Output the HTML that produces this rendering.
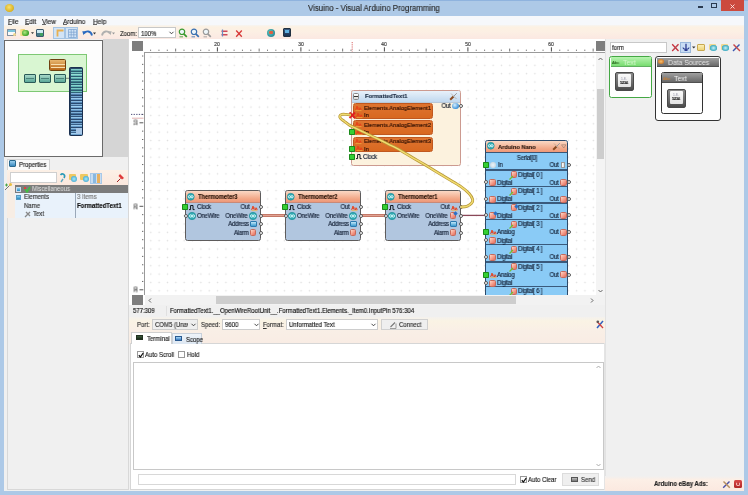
<!DOCTYPE html>
<html><head><meta charset="utf-8">
<style>
*{margin:0;padding:0;box-sizing:border-box}
html,body{width:748px;height:495px;overflow:hidden}
body{position:relative;background:#adc9e7;font-family:"Liberation Sans",sans-serif;color:#222}
.a{position:absolute}
.t{position:absolute;white-space:nowrap;line-height:1;will-change:transform;-webkit-text-stroke:0.15px currentColor}
svg{position:absolute;overflow:visible}
</style></head><body>
<div class="a" style="left:0px;top:0px;width:748px;height:1px;background:#8fb3de"></div>
<div class="t" style="left:307.5px;top:4px;font-size:8.489px;transform:scaleX(0.9259);transform-origin:0 0;color:#2a2a2a">Visuino - Visual Arduino Programming</div>
<div class="a" style="left:5px;top:3.6px;width:8.6px;height:8px;border-radius:50%;background:radial-gradient(circle at 45% 40%,#f8e070,#d8b020 70%,#b89010)"></div>
<div class="a" style="left:698px;top:6.2px;width:4.6px;height:1.4px;background:#2a3a50"></div>
<div class="a" style="left:711.3px;top:3.4px;width:5.6px;height:4.4px;border:0.9px solid #2a3a50;border-top-width:1.5px"></div>
<div class="a" style="left:721px;top:0.3px;width:23px;height:10.5px;background:#cc4a3e"></div>
<svg style="left:730.3px;top:3.5px" width="5" height="5"><path d="M0.5 0.5L4.5 4.5M4.5 0.5L0.5 4.5" stroke="#fae8e6" stroke-width="0.9"/></svg>
<div class="a" style="left:4px;top:16px;width:740px;height:474.5px;background:#f0f0f0"></div>
<div class="a" style="left:4px;top:16px;width:740px;height:9px;background:#f6f8fb"></div>
<div class="t" style="left:8px;top:18px;font-size:7.280px;transform:scaleX(0.8929);transform-origin:0 0;color:#222"><u>F</u>ile</div>
<div class="t" style="left:25px;top:18px;font-size:7.280px;transform:scaleX(0.8929);transform-origin:0 0;color:#222"><u>E</u>dit</div>
<div class="t" style="left:42px;top:18px;font-size:7.280px;transform:scaleX(0.8929);transform-origin:0 0;color:#222"><u>V</u>iew</div>
<div class="t" style="left:62.6px;top:18px;font-size:7.280px;transform:scaleX(0.8929);transform-origin:0 0;color:#222"><u>A</u>rduino</div>
<div class="t" style="left:92.7px;top:18px;font-size:7.280px;transform:scaleX(0.8929);transform-origin:0 0;color:#222"><u>H</u>elp</div>
<div class="a" style="left:4px;top:25px;width:740px;height:14.4px;background:linear-gradient(#f6f4f2 0,#fcf1e2 2px,#fcefe4 50%,#fbe8e2 100%)"></div>
<div class="a" style="left:8px;top:24.3px;width:3.5px;height:0.7px;background:#666"></div>
<div class="a" style="left:25px;top:24.3px;width:3.8px;height:0.7px;background:#666"></div>
<div class="a" style="left:42px;top:24.3px;width:4.2px;height:0.7px;background:#666"></div>
<div class="a" style="left:62.6px;top:24.3px;width:4.3px;height:0.7px;background:#666"></div>
<div class="a" style="left:92.7px;top:24.3px;width:4.6px;height:0.7px;background:#666"></div>
<div class="a" style="left:4px;top:40px;width:99px;height:116.6px;background:#fdfdfd;border:1px solid #6a6a6a"></div>
<div class="a" style="left:103px;top:39px;width:26px;height:118px;background:#d5d5d5"></div>
<div class="a" style="left:129px;top:39px;width:477px;height:266px;background:#fff"></div>
<div class="a" style="left:128px;top:39px;width:1px;height:451px;background:#d8d8d8"></div>
<div class="a" style="left:132px;top:41px;width:11px;height:10px;background:#7e7e7e"></div>
<div class="a" style="left:596px;top:41px;width:10px;height:10px;background:#7e7e7e"></div>
<div class="a" style="left:144px;top:51.9px;width:461px;height:1.4px;background:#9a9a9a"></div>
<div class="a" style="left:144.1px;top:52.2px;width:1.2px;height:243px;background:#9a9a9a"></div>
<div class="a" style="left:132px;top:295px;width:11px;height:10px;background:#7e7e7e"></div>
<div class="a" style="left:596px;top:53px;width:9px;height:242px;background:#f4f4f4"></div>
<div class="a" style="left:597px;top:89px;width:7px;height:70px;background:#cdcdcd"></div>
<div class="a" style="left:145px;top:295px;width:460px;height:10px;background:#f2f2f2"></div>
<div class="a" style="left:216px;top:296px;width:300px;height:8px;background:#cdcdcd"></div>
<svg style="left:147.5px;top:298px" width="4" height="5"><path d="M3 0.5L1 2.5L3 4.5" stroke="#555" stroke-width="0.9" fill="none"/></svg>
<svg style="left:589.5px;top:298px" width="4" height="5"><path d="M1 0.5L3 2.5L1 4.5" stroke="#555" stroke-width="0.9" fill="none"/></svg>
<svg style="left:598px;top:57px" width="5" height="4"><path d="M0.5 3L2.5 1L4.5 3" stroke="#555" stroke-width="0.9" fill="none"/></svg>
<svg style="left:598px;top:289px" width="5" height="4"><path d="M0.5 1L2.5 3L4.5 1" stroke="#555" stroke-width="0.9" fill="none"/></svg>
<div class="a" style="left:0;top:0;width:596px;height:295px;overflow:hidden">
<svg style="left:0;top:0" width="596" height="295"><defs><pattern id="gd" x="146.6" y="52.8" width="8.35" height="8.35" patternUnits="userSpaceOnUse"><path d="M3.4 4.2H5M4.2 3.4V5" stroke="#dedede" stroke-width="0.7"/></pattern></defs><rect x="145.5" y="53.5" width="451" height="242" fill="url(#gd)"/></svg>
<svg style="left:0;top:0" width="596" height="295"><path d="M261 215.4H285M361 215.4H385" stroke="#b86a58" stroke-width="3" fill="none"/><path d="M261 215.4H285M361 215.4H385" stroke="#e2a292" stroke-width="1.5" fill="none"/><path d="M461 215.4H485" stroke="#8a4858" stroke-width="1.3" fill="none"/></svg>
<div class="a" style="left:185px;top:190.2px;width:75.5px;height:51px;border:1px solid #5e5c5c;border-radius:2.5px;background:#b1c6df;overflow:hidden"><div class="a" style="left:0;top:0;width:74px;height:11.8px;background:linear-gradient(#fad8c4,#f2a888 70%,#ee9878);border-bottom:0.8px solid #c88a78"></div></div>
<svg style="left:187.3px;top:192.5px" width="7.5" height="7.5"><circle cx="3.75" cy="3.75" r="3.45" fill="#2eaab4" stroke="#1e8a94" stroke-width="0.6"/><circle cx="2.45" cy="3.75" r="1.12" fill="none" stroke="#e8ffff" stroke-width="0.9"/><circle cx="5.05" cy="3.75" r="1.12" fill="none" stroke="#e8ffff" stroke-width="0.9"/></svg>
<div class="t" style="left:198px;top:194px;font-size:6.555px;transform:scaleX(0.8696);transform-origin:0 0;font-weight:bold;color:#2a1408">Thermometer3</div>
<div class="a" style="left:181.7px;top:203.7px;width:6px;height:6.2px;background:#34d034;border:1px solid #1a8a1a;border-radius:0.8px"></div>
<svg style="left:189px;top:204.6px" width="6" height="5"><path d="M0 4.6H1.6V0.5H4V4.6H5.6" stroke="#101820" stroke-width="1" fill="none"/></svg>
<div class="t" style="left:196.5px;top:204px;font-size:6.466px;transform:scaleX(0.9434);transform-origin:0 0;color:#142035;letter-spacing:-0.265px">Clock</div>
<div class="a" style="left:183.5px;top:213.5px;width:4px;height:4px;background:#fff;border:0.8px solid #555;border-radius:50%"></div>
<svg style="left:188px;top:211.5px" width="8" height="8"><circle cx="4.0" cy="4.0" r="3.7" fill="#2eaab4" stroke="#1e8a94" stroke-width="0.6"/><circle cx="2.7" cy="4.0" r="1.20" fill="none" stroke="#e8ffff" stroke-width="0.9"/><circle cx="5.3" cy="4.0" r="1.20" fill="none" stroke="#e8ffff" stroke-width="0.9"/></svg>
<div class="t" style="left:197px;top:213px;font-size:6.466px;transform:scaleX(0.9434);transform-origin:0 0;color:#142035;letter-spacing:-0.265px">OneWire</div>
<div class="t" style="right:346.00px;top:204px;font-size:6.466px;transform:scaleX(0.9434);transform-origin:100% 0;color:#142035;letter-spacing:-0.265px">Out</div>
<svg style="left:250.5px;top:204.5px" width="7" height="6"><path d="M0.6 5 L2 1 L3.3 5 M1.2 3.5H2.8 M3.8 2.3 L4.6 5 L5.4 2.8 L6.2 5" stroke="#e84018" stroke-width="0.9" fill="none"/><path d="M0.5 5.6H6.5" stroke="#f8b040" stroke-width="0.7"/></svg>
<div class="a" style="left:258.5px;top:205px;width:4px;height:4px;background:#fff;border:0.8px solid #555;border-radius:50%"></div>
<div class="t" style="right:348.00px;top:213px;font-size:6.466px;transform:scaleX(0.9434);transform-origin:100% 0;color:#142035;letter-spacing:-0.265px">OneWire</div>
<svg style="left:249.0px;top:211.5px" width="8" height="8"><circle cx="4.0" cy="4.0" r="3.7" fill="#2eaab4" stroke="#1e8a94" stroke-width="0.6"/><circle cx="2.7" cy="4.0" r="1.20" fill="none" stroke="#e8ffff" stroke-width="0.9"/><circle cx="5.3" cy="4.0" r="1.20" fill="none" stroke="#e8ffff" stroke-width="0.9"/></svg>
<div class="a" style="left:258.5px;top:213.5px;width:4px;height:4px;background:#fff;border:0.8px solid #555;border-radius:50%"></div>
<div class="t" style="right:347.50px;top:221px;font-size:6.466px;transform:scaleX(0.9434);transform-origin:100% 0;color:#142035;letter-spacing:-0.265px">Address</div>
<div class="a" style="left:249.5px;top:221px;width:7px;height:6px;border-radius:1px;background:linear-gradient(#bfe6f8,#3a9ad0);border:0.6px solid #2a7ab0"></div>
<div class="a" style="left:258.5px;top:222px;width:4px;height:4px;background:#fff;border:0.8px solid #555;border-radius:50%"></div>
<div class="t" style="right:347.50px;top:230px;font-size:6.466px;transform:scaleX(0.9434);transform-origin:100% 0;color:#142035;letter-spacing:-0.265px">Alarm</div>
<div class="a" style="left:249.5px;top:229px;width:6.5px;height:7px;border-radius:1.5px;background:linear-gradient(135deg,#fcd8c8,#f49a88 55%,#e07060);border:0.6px solid #c86a5a"></div>
<div class="a" style="left:258.5px;top:230.5px;width:4px;height:4px;background:#fff;border:0.8px solid #555;border-radius:50%"></div>
<div class="a" style="left:285px;top:190.2px;width:75.5px;height:51px;border:1px solid #5e5c5c;border-radius:2.5px;background:#b1c6df;overflow:hidden"><div class="a" style="left:0;top:0;width:74px;height:11.8px;background:linear-gradient(#fad8c4,#f2a888 70%,#ee9878);border-bottom:0.8px solid #c88a78"></div></div>
<svg style="left:287.3px;top:192.5px" width="7.5" height="7.5"><circle cx="3.75" cy="3.75" r="3.45" fill="#2eaab4" stroke="#1e8a94" stroke-width="0.6"/><circle cx="2.45" cy="3.75" r="1.12" fill="none" stroke="#e8ffff" stroke-width="0.9"/><circle cx="5.05" cy="3.75" r="1.12" fill="none" stroke="#e8ffff" stroke-width="0.9"/></svg>
<div class="t" style="left:298px;top:194px;font-size:6.555px;transform:scaleX(0.8696);transform-origin:0 0;font-weight:bold;color:#2a1408">Thermometer2</div>
<div class="a" style="left:281.7px;top:203.7px;width:6px;height:6.2px;background:#34d034;border:1px solid #1a8a1a;border-radius:0.8px"></div>
<svg style="left:289px;top:204.6px" width="6" height="5"><path d="M0 4.6H1.6V0.5H4V4.6H5.6" stroke="#101820" stroke-width="1" fill="none"/></svg>
<div class="t" style="left:296.5px;top:204px;font-size:6.466px;transform:scaleX(0.9434);transform-origin:0 0;color:#142035;letter-spacing:-0.265px">Clock</div>
<div class="a" style="left:283.5px;top:213.5px;width:4px;height:4px;background:#fff;border:0.8px solid #555;border-radius:50%"></div>
<svg style="left:288px;top:211.5px" width="8" height="8"><circle cx="4.0" cy="4.0" r="3.7" fill="#2eaab4" stroke="#1e8a94" stroke-width="0.6"/><circle cx="2.7" cy="4.0" r="1.20" fill="none" stroke="#e8ffff" stroke-width="0.9"/><circle cx="5.3" cy="4.0" r="1.20" fill="none" stroke="#e8ffff" stroke-width="0.9"/></svg>
<div class="t" style="left:297px;top:213px;font-size:6.466px;transform:scaleX(0.9434);transform-origin:0 0;color:#142035;letter-spacing:-0.265px">OneWire</div>
<div class="t" style="right:246.00px;top:204px;font-size:6.466px;transform:scaleX(0.9434);transform-origin:100% 0;color:#142035;letter-spacing:-0.265px">Out</div>
<svg style="left:350.5px;top:204.5px" width="7" height="6"><path d="M0.6 5 L2 1 L3.3 5 M1.2 3.5H2.8 M3.8 2.3 L4.6 5 L5.4 2.8 L6.2 5" stroke="#e84018" stroke-width="0.9" fill="none"/><path d="M0.5 5.6H6.5" stroke="#f8b040" stroke-width="0.7"/></svg>
<div class="a" style="left:358.5px;top:205px;width:4px;height:4px;background:#fff;border:0.8px solid #555;border-radius:50%"></div>
<div class="t" style="right:248.00px;top:213px;font-size:6.466px;transform:scaleX(0.9434);transform-origin:100% 0;color:#142035;letter-spacing:-0.265px">OneWire</div>
<svg style="left:349.0px;top:211.5px" width="8" height="8"><circle cx="4.0" cy="4.0" r="3.7" fill="#2eaab4" stroke="#1e8a94" stroke-width="0.6"/><circle cx="2.7" cy="4.0" r="1.20" fill="none" stroke="#e8ffff" stroke-width="0.9"/><circle cx="5.3" cy="4.0" r="1.20" fill="none" stroke="#e8ffff" stroke-width="0.9"/></svg>
<div class="a" style="left:358.5px;top:213.5px;width:4px;height:4px;background:#fff;border:0.8px solid #555;border-radius:50%"></div>
<div class="t" style="right:247.50px;top:221px;font-size:6.466px;transform:scaleX(0.9434);transform-origin:100% 0;color:#142035;letter-spacing:-0.265px">Address</div>
<div class="a" style="left:349.5px;top:221px;width:7px;height:6px;border-radius:1px;background:linear-gradient(#bfe6f8,#3a9ad0);border:0.6px solid #2a7ab0"></div>
<div class="a" style="left:358.5px;top:222px;width:4px;height:4px;background:#fff;border:0.8px solid #555;border-radius:50%"></div>
<div class="t" style="right:247.50px;top:230px;font-size:6.466px;transform:scaleX(0.9434);transform-origin:100% 0;color:#142035;letter-spacing:-0.265px">Alarm</div>
<div class="a" style="left:349.5px;top:229px;width:6.5px;height:7px;border-radius:1.5px;background:linear-gradient(135deg,#fcd8c8,#f49a88 55%,#e07060);border:0.6px solid #c86a5a"></div>
<div class="a" style="left:358.5px;top:230.5px;width:4px;height:4px;background:#fff;border:0.8px solid #555;border-radius:50%"></div>
<div class="a" style="left:385px;top:190.2px;width:75.5px;height:51px;border:1px solid #5e5c5c;border-radius:2.5px;background:#b1c6df;overflow:hidden"><div class="a" style="left:0;top:0;width:74px;height:11.8px;background:linear-gradient(#fad8c4,#f2a888 70%,#ee9878);border-bottom:0.8px solid #c88a78"></div></div>
<svg style="left:387.3px;top:192.5px" width="7.5" height="7.5"><circle cx="3.75" cy="3.75" r="3.45" fill="#2eaab4" stroke="#1e8a94" stroke-width="0.6"/><circle cx="2.45" cy="3.75" r="1.12" fill="none" stroke="#e8ffff" stroke-width="0.9"/><circle cx="5.05" cy="3.75" r="1.12" fill="none" stroke="#e8ffff" stroke-width="0.9"/></svg>
<div class="t" style="left:398px;top:194px;font-size:6.555px;transform:scaleX(0.8696);transform-origin:0 0;font-weight:bold;color:#2a1408">Thermometer1</div>
<div class="a" style="left:381.7px;top:203.7px;width:6px;height:6.2px;background:#34d034;border:1px solid #1a8a1a;border-radius:0.8px"></div>
<svg style="left:389px;top:204.6px" width="6" height="5"><path d="M0 4.6H1.6V0.5H4V4.6H5.6" stroke="#101820" stroke-width="1" fill="none"/></svg>
<div class="t" style="left:396.5px;top:204px;font-size:6.466px;transform:scaleX(0.9434);transform-origin:0 0;color:#142035;letter-spacing:-0.265px">Clock</div>
<div class="a" style="left:383.5px;top:213.5px;width:4px;height:4px;background:#fff;border:0.8px solid #555;border-radius:50%"></div>
<svg style="left:388px;top:211.5px" width="8" height="8"><circle cx="4.0" cy="4.0" r="3.7" fill="#2eaab4" stroke="#1e8a94" stroke-width="0.6"/><circle cx="2.7" cy="4.0" r="1.20" fill="none" stroke="#e8ffff" stroke-width="0.9"/><circle cx="5.3" cy="4.0" r="1.20" fill="none" stroke="#e8ffff" stroke-width="0.9"/></svg>
<div class="t" style="left:397px;top:213px;font-size:6.466px;transform:scaleX(0.9434);transform-origin:0 0;color:#142035;letter-spacing:-0.265px">OneWire</div>
<div class="t" style="right:146.00px;top:204px;font-size:6.466px;transform:scaleX(0.9434);transform-origin:100% 0;color:#142035;letter-spacing:-0.265px">Out</div>
<svg style="left:450.5px;top:204.5px" width="7" height="6"><path d="M0.6 5 L2 1 L3.3 5 M1.2 3.5H2.8 M3.8 2.3 L4.6 5 L5.4 2.8 L6.2 5" stroke="#e84018" stroke-width="0.9" fill="none"/><path d="M0.5 5.6H6.5" stroke="#f8b040" stroke-width="0.7"/></svg>
<div class="a" style="left:458.5px;top:205px;width:4px;height:4px;background:#fff;border:0.8px solid #555;border-radius:50%"></div>
<div class="t" style="right:148.00px;top:213px;font-size:6.466px;transform:scaleX(0.9434);transform-origin:100% 0;color:#142035;letter-spacing:-0.265px">OneWire</div>
<div class="a" style="left:449.5px;top:212.3px;width:6.5px;height:7px;border-radius:1.5px;background:linear-gradient(135deg,#fcd8c8,#f49a88 55%,#e07060);border:0.6px solid #c86a5a"></div>
<svg style="left:452.5px;top:210.5px" width="5" height="5"><path d="M2.5 0.3L4.7 2.5L2.5 4.7L0.3 2.5Z" fill="#2a70c8"/></svg>
<div class="a" style="left:458.5px;top:213.5px;width:4px;height:4px;background:#fff;border:0.8px solid #555;border-radius:50%"></div>
<div class="t" style="right:147.50px;top:221px;font-size:6.466px;transform:scaleX(0.9434);transform-origin:100% 0;color:#142035;letter-spacing:-0.265px">Address</div>
<div class="a" style="left:449.5px;top:221px;width:7px;height:6px;border-radius:1px;background:linear-gradient(#bfe6f8,#3a9ad0);border:0.6px solid #2a7ab0"></div>
<div class="a" style="left:458.5px;top:222px;width:4px;height:4px;background:#fff;border:0.8px solid #555;border-radius:50%"></div>
<div class="t" style="right:147.50px;top:230px;font-size:6.466px;transform:scaleX(0.9434);transform-origin:100% 0;color:#142035;letter-spacing:-0.265px">Alarm</div>
<div class="a" style="left:449.5px;top:229px;width:6.5px;height:7px;border-radius:1.5px;background:linear-gradient(135deg,#fcd8c8,#f49a88 55%,#e07060);border:0.6px solid #c86a5a"></div>
<div class="a" style="left:458.5px;top:230.5px;width:4px;height:4px;background:#fff;border:0.8px solid #555;border-radius:50%"></div>
<div class="a" style="left:351.3px;top:90.3px;width:109.4px;height:76.2px;border:1px solid #cc9a90;border-radius:2.5px;background:#fcf2de;overflow:hidden"><div class="a" style="left:0;top:0;width:108px;height:11.5px;background:linear-gradient(#e8f1fa,#c0d8ef);border-bottom:0.8px solid #b8c8d8"></div></div>
<div class="a" style="left:352.8px;top:92.5px;width:6.5px;height:7px;border-radius:1.5px;background:linear-gradient(#fff,#d8d8d8);border:0.6px solid #888"></div>
<div class="a" style="left:354.3px;top:96px;width:3.5px;height:0.8px;background:#333"></div>
<div class="t" style="left:365px;top:93px;font-size:6.042px;transform:scaleX(0.9434);transform-origin:0 0;font-weight:bold;color:#1a2a40">FormattedText1</div>
<svg style="left:449px;top:92px" width="9" height="9"><path d="M1.2 7.8L4.5 4.5" stroke="#8a4a20" stroke-width="2"/><path d="M4.5 4.5L7.8 1.2" stroke="#9a9a9a" stroke-width="1"/><path d="M2 1.5L7.5 7" stroke="#b0a090" stroke-width="0.9" opacity=".8"/></svg>
<div class="a" style="left:352.6px;top:103.3px;width:80px;height:15.3px;border-radius:2.5px;background:linear-gradient(#de7430,#d86820);border:0.8px solid #c05820"></div>
<svg style="left:355px;top:104.5px" width="7" height="6"><path d="M0.6 5 L2 1 L3.3 5 M1.2 3.5H2.8 M3.8 2.3 L4.6 5 L5.4 2.8 L6.2 5" stroke="#e84018" stroke-width="0.9" fill="none"/><path d="M0.5 5.6H6.5" stroke="#f8b040" stroke-width="0.7"/></svg>
<svg style="left:356px;top:111.8px" width="7" height="6"><path d="M0.6 5 L2 1 L3.3 5 M1.2 3.5H2.8 M3.8 2.3 L4.6 5 L5.4 2.8 L6.2 5" stroke="#e84018" stroke-width="0.9" fill="none"/><path d="M0.5 5.6H6.5" stroke="#f8b040" stroke-width="0.7"/></svg>
<div class="t" style="left:363.5px;top:105px;font-size:6.042px;transform:scaleX(0.9434);transform-origin:0 0;color:#301000">Elements.AnalogElement1</div>
<div class="t" style="left:363.5px;top:112px;font-size:6.042px;transform:scaleX(0.9434);transform-origin:0 0;color:#200800">In</div>
<div class="a" style="left:352.6px;top:120.0px;width:80px;height:15.3px;border-radius:2.5px;background:linear-gradient(#de7430,#d86820);border:0.8px solid #c05820"></div>
<svg style="left:355px;top:121.2px" width="7" height="6"><path d="M0.6 5 L2 1 L3.3 5 M1.2 3.5H2.8 M3.8 2.3 L4.6 5 L5.4 2.8 L6.2 5" stroke="#e84018" stroke-width="0.9" fill="none"/><path d="M0.5 5.6H6.5" stroke="#f8b040" stroke-width="0.7"/></svg>
<svg style="left:356px;top:128.5px" width="7" height="6"><path d="M0.6 5 L2 1 L3.3 5 M1.2 3.5H2.8 M3.8 2.3 L4.6 5 L5.4 2.8 L6.2 5" stroke="#e84018" stroke-width="0.9" fill="none"/><path d="M0.5 5.6H6.5" stroke="#f8b040" stroke-width="0.7"/></svg>
<div class="t" style="left:363.5px;top:122px;font-size:6.042px;transform:scaleX(0.9434);transform-origin:0 0;color:#301000">Elements.AnalogElement2</div>
<div class="t" style="left:363.5px;top:129px;font-size:6.042px;transform:scaleX(0.9434);transform-origin:0 0;color:#200800">In</div>
<div class="a" style="left:352.6px;top:136.6px;width:80px;height:15.3px;border-radius:2.5px;background:linear-gradient(#de7430,#d86820);border:0.8px solid #c05820"></div>
<svg style="left:355px;top:137.79999999999998px" width="7" height="6"><path d="M0.6 5 L2 1 L3.3 5 M1.2 3.5H2.8 M3.8 2.3 L4.6 5 L5.4 2.8 L6.2 5" stroke="#e84018" stroke-width="0.9" fill="none"/><path d="M0.5 5.6H6.5" stroke="#f8b040" stroke-width="0.7"/></svg>
<svg style="left:356px;top:145.1px" width="7" height="6"><path d="M0.6 5 L2 1 L3.3 5 M1.2 3.5H2.8 M3.8 2.3 L4.6 5 L5.4 2.8 L6.2 5" stroke="#e84018" stroke-width="0.9" fill="none"/><path d="M0.5 5.6H6.5" stroke="#f8b040" stroke-width="0.7"/></svg>
<div class="t" style="left:363.5px;top:138px;font-size:6.042px;transform:scaleX(0.9434);transform-origin:0 0;color:#301000">Elements.AnalogElement3</div>
<div class="t" style="left:363.5px;top:146px;font-size:6.042px;transform:scaleX(0.9434);transform-origin:0 0;color:#200800">In</div>
<svg style="left:348.5px;top:111.5px" width="7" height="7"><path d="M0.5 0.5L6 6M6 0.5L0.5 6" stroke="#e02020" stroke-width="2"/></svg>
<div class="a" style="left:349.2px;top:129.2px;width:6px;height:6.2px;background:#34d034;border:1px solid #1a8a1a;border-radius:0.8px"></div>
<div class="a" style="left:349.2px;top:146.0px;width:6px;height:6.2px;background:#34d034;border:1px solid #1a8a1a;border-radius:0.8px"></div>
<div class="a" style="left:349.2px;top:154.2px;width:6px;height:6.2px;background:#34d034;border:1px solid #1a8a1a;border-radius:0.8px"></div>
<svg style="left:356px;top:154.3px" width="6" height="5"><path d="M0 4.6H1.6V0.5H4V4.6H5.6" stroke="#101820" stroke-width="1" fill="none"/></svg>
<div class="t" style="left:362.5px;top:154px;font-size:6.466px;transform:scaleX(0.9434);transform-origin:0 0;color:#142035;letter-spacing:-0.265px">Clock</div>
<div class="t" style="right:145.00px;top:103px;font-size:6.466px;transform:scaleX(0.9434);transform-origin:100% 0;color:#101828;letter-spacing:-0.265px">Out</div>
<div class="a" style="left:452px;top:102.6px;width:6.5px;height:6px;border-radius:50%;background:radial-gradient(circle at 40% 35%,#d8f0ff,#3a90d8 70%,#2a6ab0)"></div>
<div class="a" style="left:459px;top:103.5px;width:4px;height:4px;background:#fff;border:0.8px solid #555;border-radius:50%"></div>
<svg style="left:0;top:0" width="596" height="295"><path d="M460.6 207 C461.62 206.90 464.88 207.02 466.7 206.4 C468.52 205.78 470.50 204.42 471.5 203.3 C472.50 202.18 473.10 201.32 472.7 199.7 C472.30 198.08 471.12 195.82 469.1 193.6 C467.08 191.38 464.03 188.82 460.6 186.4 C457.17 183.98 452.53 181.53 448.5 179.1 C444.47 176.67 440.40 174.23 436.4 171.8 C432.40 169.37 428.57 166.92 424.5 164.5 C420.43 162.08 416.53 159.95 412 157.3 C407.47 154.65 401.27 150.80 397.3 148.6 C393.33 146.40 391.23 145.62 388.2 144.1 C385.17 142.58 382.47 141.13 379.1 139.5 C375.73 137.87 370.97 135.72 368 134.3 C365.03 132.88 363.43 132.05 361.3 131 C359.17 129.95 357.22 129.00 355.2 128 C353.18 127.00 351.02 126.12 349.2 125 C347.38 123.88 345.72 122.37 344.3 121.3 C342.88 120.23 341.45 119.45 340.7 118.6 C339.95 117.75 339.58 116.90 339.8 116.2 C340.02 115.50 340.95 114.70 342 114.4 C343.05 114.10 344.60 114.30 346.1 114.4 C347.60 114.50 350.18 114.90 351 115" stroke="#b89838" stroke-width="2.9" fill="none"/><path d="M460.6 207 C461.62 206.90 464.88 207.02 466.7 206.4 C468.52 205.78 470.50 204.42 471.5 203.3 C472.50 202.18 473.10 201.32 472.7 199.7 C472.30 198.08 471.12 195.82 469.1 193.6 C467.08 191.38 464.03 188.82 460.6 186.4 C457.17 183.98 452.53 181.53 448.5 179.1 C444.47 176.67 440.40 174.23 436.4 171.8 C432.40 169.37 428.57 166.92 424.5 164.5 C420.43 162.08 416.53 159.95 412 157.3 C407.47 154.65 401.27 150.80 397.3 148.6 C393.33 146.40 391.23 145.62 388.2 144.1 C385.17 142.58 382.47 141.13 379.1 139.5 C375.73 137.87 370.97 135.72 368 134.3 C365.03 132.88 363.43 132.05 361.3 131 C359.17 129.95 357.22 129.00 355.2 128 C353.18 127.00 351.02 126.12 349.2 125 C347.38 123.88 345.72 122.37 344.3 121.3 C342.88 120.23 341.45 119.45 340.7 118.6 C339.95 117.75 339.58 116.90 339.8 116.2 C340.02 115.50 340.95 114.70 342 114.4 C343.05 114.10 344.60 114.30 346.1 114.4 C347.60 114.50 350.18 114.90 351 115" stroke="#f0dc70" stroke-width="1.4" fill="none"/></svg>
<div class="a" style="left:485.4px;top:140.3px;width:83.10000000000002px;height:170px;border:1px solid #2c4a6a;border-radius:2.5px;background:#8acbf6;overflow:hidden"><div class="a" style="left:0;top:0;width:90px;height:11.7px;background:linear-gradient(#fad8c4,#f2a888 70%,#ee9878);border-bottom:1.3px solid #3a5676"></div></div>
<svg style="left:487px;top:142.2px" width="7.5" height="7.5"><circle cx="3.75" cy="3.75" r="3.45" fill="#2eaab4" stroke="#1e8a94" stroke-width="0.6"/><circle cx="2.45" cy="3.75" r="1.12" fill="none" stroke="#e8ffff" stroke-width="0.9"/><circle cx="5.05" cy="3.75" r="1.12" fill="none" stroke="#e8ffff" stroke-width="0.9"/></svg>
<div class="t" style="left:497.5px;top:144px;font-size:6.042px;transform:scaleX(0.9434);transform-origin:0 0;font-weight:bold;color:#2a1810">Arduino Nano</div>
<svg style="left:552px;top:142px" width="9" height="9"><path d="M1.2 7.8L4.5 4.5" stroke="#8a4a20" stroke-width="2"/><path d="M4.5 4.5L7.8 1.2" stroke="#9a9a9a" stroke-width="1"/><path d="M2 1.5L7.5 7" stroke="#b0a090" stroke-width="0.9" opacity=".8"/></svg>
<svg style="left:561px;top:144px" width="6" height="5"><path d="M0.5 0.8H5L2.75 4Z" stroke="#a08070" stroke-width="0.7" fill="none"/></svg>
<div class="a" style="left:486.4px;top:169.4px;width:81.10000000000002px;height:1.4px;background:#3a5a7c"></div>
<div class="a" style="left:486.4px;top:185.9px;width:81.10000000000002px;height:1.4px;background:#3a5a7c"></div>
<div class="a" style="left:486.4px;top:202.4px;width:81.10000000000002px;height:1.4px;background:#3a5a7c"></div>
<div class="a" style="left:486.4px;top:218.9px;width:81.10000000000002px;height:1.4px;background:#3a5a7c"></div>
<div class="a" style="left:486.4px;top:244.0px;width:81.10000000000002px;height:1.4px;background:#3a5a7c"></div>
<div class="a" style="left:486.4px;top:261.4px;width:81.10000000000002px;height:1.4px;background:#3a5a7c"></div>
<div class="a" style="left:486.4px;top:286.09999999999997px;width:81.10000000000002px;height:1.4px;background:#3a5a7c"></div>
<div class="t" style="left:476.50px;width:100px;text-align:center;top:155px;font-size:6.466px;transform:scaleX(0.9434);transform-origin:50% 0;color:#142035;letter-spacing:-0.265px">Serial[0]</div>
<div class="a" style="left:482.7px;top:162.2px;width:6px;height:6.2px;background:#34d034;border:1px solid #1a8a1a;border-radius:0.8px"></div>
<div class="a" style="left:490px;top:161.5px;width:6px;height:6.5px;border-radius:50%;background:radial-gradient(#fff,#ccc);opacity:.8"></div>
<div class="t" style="left:497.5px;top:162px;font-size:6.466px;transform:scaleX(0.9434);transform-origin:0 0;color:#142035;letter-spacing:-0.265px">In</div>
<div class="t" style="right:37.00px;top:162px;font-size:6.466px;transform:scaleX(0.9434);transform-origin:100% 0;color:#142035;letter-spacing:-0.265px">Out</div>
<div class="a" style="left:560.5px;top:161.8px;width:4.5px;height:6.5px;background:linear-gradient(90deg,#fff,#ddd);border:0.6px solid #999"></div>
<div class="a" style="left:566.5px;top:163px;width:4px;height:4px;background:#fff;border:0.8px solid #555;border-radius:50%"></div>
<div class="a" style="left:510.5px;top:171.2px;width:6.5px;height:7px;border-radius:1.5px;background:linear-gradient(135deg,#fcd8c8,#f49a88 55%,#e07060);border:0.6px solid #c86a5a"></div>
<svg style="left:509px;top:174.5px" width="5" height="5"><path d="M0.5 4.5L4 1" stroke="#70c030" stroke-width="1.3"/></svg>
<div class="t" style="left:518px;top:172px;font-size:6.466px;transform:scaleX(0.9434);transform-origin:0 0;color:#142035;letter-spacing:-0.265px">Digital[ 0 ]</div>
<div class="a" style="left:483.5px;top:180.3px;width:4px;height:4px;background:#fff;border:0.8px solid #555;border-radius:50%"></div>
<div class="a" style="left:489px;top:179px;width:6.5px;height:7px;border-radius:1.5px;background:linear-gradient(135deg,#fcd8c8,#f49a88 55%,#e07060);border:0.6px solid #c86a5a"></div>
<div class="t" style="left:497px;top:180px;font-size:6.466px;transform:scaleX(0.9434);transform-origin:0 0;color:#142035;letter-spacing:-0.265px">Digital</div>
<div class="t" style="right:37.00px;top:180px;font-size:6.466px;transform:scaleX(0.9434);transform-origin:100% 0;color:#142035;letter-spacing:-0.265px">Out</div>
<div class="a" style="left:560px;top:179px;width:6.5px;height:7px;border-radius:1.5px;background:linear-gradient(135deg,#fcd8c8,#f49a88 55%,#e07060);border:0.6px solid #c86a5a"></div>
<div class="a" style="left:566.5px;top:180.3px;width:4px;height:4px;background:#fff;border:0.8px solid #555;border-radius:50%"></div>
<div class="a" style="left:510.5px;top:187.7px;width:6.5px;height:7px;border-radius:1.5px;background:linear-gradient(135deg,#fcd8c8,#f49a88 55%,#e07060);border:0.6px solid #c86a5a"></div>
<svg style="left:509px;top:191.0px" width="5" height="5"><path d="M0.5 4.5L4 1" stroke="#70c030" stroke-width="1.3"/></svg>
<div class="t" style="left:518px;top:188px;font-size:6.466px;transform:scaleX(0.9434);transform-origin:0 0;color:#142035;letter-spacing:-0.265px">Digital[ 1 ]</div>
<div class="a" style="left:483.5px;top:196.8px;width:4px;height:4px;background:#fff;border:0.8px solid #555;border-radius:50%"></div>
<div class="a" style="left:489px;top:195.5px;width:6.5px;height:7px;border-radius:1.5px;background:linear-gradient(135deg,#fcd8c8,#f49a88 55%,#e07060);border:0.6px solid #c86a5a"></div>
<div class="t" style="left:497px;top:196px;font-size:6.466px;transform:scaleX(0.9434);transform-origin:0 0;color:#142035;letter-spacing:-0.265px">Digital</div>
<div class="t" style="right:37.00px;top:196px;font-size:6.466px;transform:scaleX(0.9434);transform-origin:100% 0;color:#142035;letter-spacing:-0.265px">Out</div>
<div class="a" style="left:560px;top:195.5px;width:6.5px;height:7px;border-radius:1.5px;background:linear-gradient(135deg,#fcd8c8,#f49a88 55%,#e07060);border:0.6px solid #c86a5a"></div>
<div class="a" style="left:566.5px;top:196.8px;width:4px;height:4px;background:#fff;border:0.8px solid #555;border-radius:50%"></div>
<div class="a" style="left:510.5px;top:204.2px;width:6.5px;height:7px;border-radius:1.5px;background:linear-gradient(135deg,#fcd8c8,#f49a88 55%,#e07060);border:0.6px solid #c86a5a"></div>
<svg style="left:514px;top:203.5px" width="5" height="5"><path d="M2.5 0.3L4.7 2.5L2.5 4.7L0.3 2.5Z" fill="#2a70c8"/></svg>
<div class="t" style="left:518px;top:205px;font-size:6.466px;transform:scaleX(0.9434);transform-origin:0 0;color:#142035;letter-spacing:-0.265px">Digital[ 2 ]</div>
<div class="a" style="left:483.5px;top:213.3px;width:4px;height:4px;background:#fff;border:0.8px solid #555;border-radius:50%"></div>
<div class="a" style="left:489px;top:212px;width:6.5px;height:7px;border-radius:1.5px;background:linear-gradient(135deg,#fcd8c8,#f49a88 55%,#e07060);border:0.6px solid #c86a5a"></div>
<svg style="left:492.5px;top:211px" width="5" height="5"><path d="M2.5 0.3L4.7 2.5L2.5 4.7L0.3 2.5Z" fill="#2a70c8"/></svg>
<div class="t" style="left:497px;top:213px;font-size:6.466px;transform:scaleX(0.9434);transform-origin:0 0;color:#142035;letter-spacing:-0.265px">Digital</div>
<div class="t" style="right:37.00px;top:213px;font-size:6.466px;transform:scaleX(0.9434);transform-origin:100% 0;color:#142035;letter-spacing:-0.265px">Out</div>
<div class="a" style="left:560px;top:212px;width:6.5px;height:7px;border-radius:1.5px;background:linear-gradient(135deg,#fcd8c8,#f49a88 55%,#e07060);border:0.6px solid #c86a5a"></div>
<div class="a" style="left:566.5px;top:213.3px;width:4px;height:4px;background:#fff;border:0.8px solid #555;border-radius:50%"></div>
<div class="a" style="left:510.5px;top:220.7px;width:6.5px;height:7px;border-radius:1.5px;background:linear-gradient(135deg,#fcd8c8,#f49a88 55%,#e07060);border:0.6px solid #c86a5a"></div>
<svg style="left:509px;top:224.0px" width="5" height="5"><path d="M0.5 4.5L4 1" stroke="#70c030" stroke-width="1.3"/></svg>
<div class="t" style="left:518px;top:221px;font-size:6.466px;transform:scaleX(0.9434);transform-origin:0 0;color:#142035;letter-spacing:-0.265px">Digital[ 3 ]</div>
<div class="a" style="left:482.7px;top:229.0px;width:6px;height:6.2px;background:#34d034;border:1px solid #1a8a1a;border-radius:0.8px"></div>
<svg style="left:489.5px;top:229.2px" width="7" height="6"><path d="M0.6 5 L2 1 L3.3 5 M1.2 3.5H2.8 M3.8 2.3 L4.6 5 L5.4 2.8 L6.2 5" stroke="#e84018" stroke-width="0.9" fill="none"/><path d="M0.5 5.6H6.5" stroke="#f8b040" stroke-width="0.7"/></svg>
<div class="t" style="left:497px;top:229px;font-size:6.466px;transform:scaleX(0.9434);transform-origin:0 0;color:#142035;letter-spacing:-0.265px">Analog</div>
<div class="t" style="right:37.00px;top:229px;font-size:6.466px;transform:scaleX(0.9434);transform-origin:100% 0;color:#142035;letter-spacing:-0.265px">Out</div>
<div class="a" style="left:560px;top:228.5px;width:6.5px;height:7px;border-radius:1.5px;background:linear-gradient(135deg,#fcd8c8,#f49a88 55%,#e07060);border:0.6px solid #c86a5a"></div>
<div class="a" style="left:566.5px;top:230.0px;width:4px;height:4px;background:#fff;border:0.8px solid #555;border-radius:50%"></div>
<div class="a" style="left:483.5px;top:238.3px;width:4px;height:4px;background:#fff;border:0.8px solid #555;border-radius:50%"></div>
<div class="a" style="left:489px;top:237.0px;width:6.5px;height:7px;border-radius:1.5px;background:linear-gradient(135deg,#fcd8c8,#f49a88 55%,#e07060);border:0.6px solid #c86a5a"></div>
<div class="t" style="left:497px;top:238px;font-size:6.466px;transform:scaleX(0.9434);transform-origin:0 0;color:#142035;letter-spacing:-0.265px">Digital</div>
<div class="a" style="left:510.5px;top:245.79999999999998px;width:6.5px;height:7px;border-radius:1.5px;background:linear-gradient(135deg,#fcd8c8,#f49a88 55%,#e07060);border:0.6px solid #c86a5a"></div>
<svg style="left:509px;top:249.1px" width="5" height="5"><path d="M0.5 4.5L4 1" stroke="#70c030" stroke-width="1.3"/></svg>
<div class="t" style="left:518px;top:246px;font-size:6.466px;transform:scaleX(0.9434);transform-origin:0 0;color:#142035;letter-spacing:-0.265px">Digital[ 4 ]</div>
<div class="a" style="left:483.5px;top:254.89999999999998px;width:4px;height:4px;background:#fff;border:0.8px solid #555;border-radius:50%"></div>
<div class="a" style="left:489px;top:253.6px;width:6.5px;height:7px;border-radius:1.5px;background:linear-gradient(135deg,#fcd8c8,#f49a88 55%,#e07060);border:0.6px solid #c86a5a"></div>
<div class="t" style="left:497px;top:254px;font-size:6.466px;transform:scaleX(0.9434);transform-origin:0 0;color:#142035;letter-spacing:-0.265px">Digital</div>
<div class="t" style="right:37.00px;top:254px;font-size:6.466px;transform:scaleX(0.9434);transform-origin:100% 0;color:#142035;letter-spacing:-0.265px">Out</div>
<div class="a" style="left:560px;top:253.6px;width:6.5px;height:7px;border-radius:1.5px;background:linear-gradient(135deg,#fcd8c8,#f49a88 55%,#e07060);border:0.6px solid #c86a5a"></div>
<div class="a" style="left:566.5px;top:254.89999999999998px;width:4px;height:4px;background:#fff;border:0.8px solid #555;border-radius:50%"></div>
<div class="a" style="left:510.5px;top:263.2px;width:6.5px;height:7px;border-radius:1.5px;background:linear-gradient(135deg,#fcd8c8,#f49a88 55%,#e07060);border:0.6px solid #c86a5a"></div>
<svg style="left:509px;top:266.5px" width="5" height="5"><path d="M0.5 4.5L4 1" stroke="#70c030" stroke-width="1.3"/></svg>
<div class="t" style="left:518px;top:264px;font-size:6.466px;transform:scaleX(0.9434);transform-origin:0 0;color:#142035;letter-spacing:-0.265px">Digital[ 5 ]</div>
<div class="a" style="left:482.7px;top:271.5px;width:6px;height:6.2px;background:#34d034;border:1px solid #1a8a1a;border-radius:0.8px"></div>
<svg style="left:489.5px;top:271.7px" width="7" height="6"><path d="M0.6 5 L2 1 L3.3 5 M1.2 3.5H2.8 M3.8 2.3 L4.6 5 L5.4 2.8 L6.2 5" stroke="#e84018" stroke-width="0.9" fill="none"/><path d="M0.5 5.6H6.5" stroke="#f8b040" stroke-width="0.7"/></svg>
<div class="t" style="left:497px;top:272px;font-size:6.466px;transform:scaleX(0.9434);transform-origin:0 0;color:#142035;letter-spacing:-0.265px">Analog</div>
<div class="t" style="right:37.00px;top:272px;font-size:6.466px;transform:scaleX(0.9434);transform-origin:100% 0;color:#142035;letter-spacing:-0.265px">Out</div>
<div class="a" style="left:560px;top:271px;width:6.5px;height:7px;border-radius:1.5px;background:linear-gradient(135deg,#fcd8c8,#f49a88 55%,#e07060);border:0.6px solid #c86a5a"></div>
<div class="a" style="left:566.5px;top:272.5px;width:4px;height:4px;background:#fff;border:0.8px solid #555;border-radius:50%"></div>
<div class="a" style="left:483.5px;top:280.8px;width:4px;height:4px;background:#fff;border:0.8px solid #555;border-radius:50%"></div>
<div class="a" style="left:489px;top:279.5px;width:6.5px;height:7px;border-radius:1.5px;background:linear-gradient(135deg,#fcd8c8,#f49a88 55%,#e07060);border:0.6px solid #c86a5a"></div>
<div class="t" style="left:497px;top:280px;font-size:6.466px;transform:scaleX(0.9434);transform-origin:0 0;color:#142035;letter-spacing:-0.265px">Digital</div>
<div class="a" style="left:510.5px;top:287.9px;width:6.5px;height:7px;border-radius:1.5px;background:linear-gradient(135deg,#fcd8c8,#f49a88 55%,#e07060);border:0.6px solid #c86a5a"></div>
<svg style="left:509px;top:291.2px" width="5" height="5"><path d="M0.5 4.5L4 1" stroke="#70c030" stroke-width="1.3"/></svg>
<div class="t" style="left:518px;top:288px;font-size:6.466px;transform:scaleX(0.9434);transform-origin:0 0;color:#142035;letter-spacing:-0.265px">Digital[ 6 ]</div>
<div class="a" style="left:483.5px;top:297.0px;width:4px;height:4px;background:#fff;border:0.8px solid #555;border-radius:50%"></div>
<div class="a" style="left:489px;top:295.7px;width:6.5px;height:7px;border-radius:1.5px;background:linear-gradient(135deg,#fcd8c8,#f49a88 55%,#e07060);border:0.6px solid #c86a5a"></div>
<div class="t" style="left:497px;top:296px;font-size:6.466px;transform:scaleX(0.9434);transform-origin:0 0;color:#142035;letter-spacing:-0.265px">Digital</div>
<div class="t" style="right:37.00px;top:296px;font-size:6.466px;transform:scaleX(0.9434);transform-origin:100% 0;color:#142035;letter-spacing:-0.265px">Out</div>
<div class="a" style="left:560px;top:295.7px;width:6.5px;height:7px;border-radius:1.5px;background:linear-gradient(135deg,#fcd8c8,#f49a88 55%,#e07060);border:0.6px solid #c86a5a"></div>
<div class="a" style="left:566.5px;top:297.0px;width:4px;height:4px;background:#fff;border:0.8px solid #555;border-radius:50%"></div>
</div>
<svg style="left:0;top:0" width="748" height="300"><path d="M150.60 49.6V51" stroke="#666" stroke-width="0.8"/><path d="M158.95 49.6V51" stroke="#666" stroke-width="0.8"/><path d="M167.30 49.6V51" stroke="#666" stroke-width="0.8"/><path d="M175.65 48.6V51.5" stroke="#555" stroke-width="0.8"/><path d="M184.00 49.6V51" stroke="#666" stroke-width="0.8"/><path d="M192.35 49.6V51" stroke="#666" stroke-width="0.8"/><path d="M200.70 49.6V51" stroke="#666" stroke-width="0.8"/><path d="M209.05 49.6V51" stroke="#666" stroke-width="0.8"/><path d="M217.40 47.3V51.5" stroke="#333" stroke-width="0.9"/><path d="M225.75 49.6V51" stroke="#666" stroke-width="0.8"/><path d="M234.10 49.6V51" stroke="#666" stroke-width="0.8"/><path d="M242.45 49.6V51" stroke="#666" stroke-width="0.8"/><path d="M250.80 49.6V51" stroke="#666" stroke-width="0.8"/><path d="M259.15 48.6V51.5" stroke="#555" stroke-width="0.8"/><path d="M267.50 49.6V51" stroke="#666" stroke-width="0.8"/><path d="M275.85 49.6V51" stroke="#666" stroke-width="0.8"/><path d="M284.20 49.6V51" stroke="#666" stroke-width="0.8"/><path d="M292.55 49.6V51" stroke="#666" stroke-width="0.8"/><path d="M300.90 47.3V51.5" stroke="#333" stroke-width="0.9"/><path d="M309.25 49.6V51" stroke="#666" stroke-width="0.8"/><path d="M317.60 49.6V51" stroke="#666" stroke-width="0.8"/><path d="M325.95 49.6V51" stroke="#666" stroke-width="0.8"/><path d="M334.30 49.6V51" stroke="#666" stroke-width="0.8"/><path d="M342.65 48.6V51.5" stroke="#555" stroke-width="0.8"/><path d="M351.00 49.6V51" stroke="#666" stroke-width="0.8"/><path d="M359.35 49.6V51" stroke="#666" stroke-width="0.8"/><path d="M367.70 49.6V51" stroke="#666" stroke-width="0.8"/><path d="M376.05 49.6V51" stroke="#666" stroke-width="0.8"/><path d="M384.40 47.3V51.5" stroke="#333" stroke-width="0.9"/><path d="M392.75 49.6V51" stroke="#666" stroke-width="0.8"/><path d="M401.10 49.6V51" stroke="#666" stroke-width="0.8"/><path d="M409.45 49.6V51" stroke="#666" stroke-width="0.8"/><path d="M417.80 49.6V51" stroke="#666" stroke-width="0.8"/><path d="M426.15 48.6V51.5" stroke="#555" stroke-width="0.8"/><path d="M434.50 49.6V51" stroke="#666" stroke-width="0.8"/><path d="M442.85 49.6V51" stroke="#666" stroke-width="0.8"/><path d="M451.20 49.6V51" stroke="#666" stroke-width="0.8"/><path d="M459.55 49.6V51" stroke="#666" stroke-width="0.8"/><path d="M467.90 47.3V51.5" stroke="#333" stroke-width="0.9"/><path d="M476.25 49.6V51" stroke="#666" stroke-width="0.8"/><path d="M484.60 49.6V51" stroke="#666" stroke-width="0.8"/><path d="M492.95 49.6V51" stroke="#666" stroke-width="0.8"/><path d="M501.30 49.6V51" stroke="#666" stroke-width="0.8"/><path d="M509.65 48.6V51.5" stroke="#555" stroke-width="0.8"/><path d="M518.00 49.6V51" stroke="#666" stroke-width="0.8"/><path d="M526.35 49.6V51" stroke="#666" stroke-width="0.8"/><path d="M534.70 49.6V51" stroke="#666" stroke-width="0.8"/><path d="M543.05 49.6V51" stroke="#666" stroke-width="0.8"/><path d="M551.40 47.3V51.5" stroke="#333" stroke-width="0.9"/><path d="M559.75 49.6V51" stroke="#666" stroke-width="0.8"/><path d="M568.10 49.6V51" stroke="#666" stroke-width="0.8"/><path d="M576.45 49.6V51" stroke="#666" stroke-width="0.8"/><path d="M584.80 49.6V51" stroke="#666" stroke-width="0.8"/><path d="M593.15 48.6V51.5" stroke="#555" stroke-width="0.8"/><path d="M352.2 42V51.5" stroke="#d04040" stroke-width="0.8" stroke-dasharray="1.2 1"/></svg>
<div class="t" style="left:167.30px;width:100px;text-align:center;top:42px;font-size:5.300px;transform:scaleX(0.9434);transform-origin:50% 0;color:#333">20</div>
<div class="t" style="left:250.80px;width:100px;text-align:center;top:42px;font-size:5.300px;transform:scaleX(0.9434);transform-origin:50% 0;color:#333">30</div>
<div class="t" style="left:334.30px;width:100px;text-align:center;top:42px;font-size:5.300px;transform:scaleX(0.9434);transform-origin:50% 0;color:#333">40</div>
<div class="t" style="left:417.80px;width:100px;text-align:center;top:42px;font-size:5.300px;transform:scaleX(0.9434);transform-origin:50% 0;color:#333">50</div>
<div class="t" style="left:501.30px;width:100px;text-align:center;top:42px;font-size:5.300px;transform:scaleX(0.9434);transform-origin:50% 0;color:#333">60</div>
<svg style="left:0;top:0" width="748" height="300"><path d="M142 56.00H143.3" stroke="#555" stroke-width="0.9"/><path d="M142 64.35H143.3" stroke="#555" stroke-width="0.9"/><path d="M142 72.70H143.3" stroke="#555" stroke-width="0.9"/><path d="M142 81.05H143.3" stroke="#555" stroke-width="0.9"/><path d="M142 89.40H143.3" stroke="#555" stroke-width="0.9"/><path d="M142 97.75H143.3" stroke="#555" stroke-width="0.9"/><path d="M142 106.10H143.3" stroke="#555" stroke-width="0.9"/><path d="M142 114.45H143.3" stroke="#555" stroke-width="0.9"/><path d="M139.5 122.80H143.3" stroke="#444" stroke-width="0.9"/><path d="M142 131.15H143.3" stroke="#555" stroke-width="0.9"/><path d="M142 139.50H143.3" stroke="#555" stroke-width="0.9"/><path d="M142 147.85H143.3" stroke="#555" stroke-width="0.9"/><path d="M142 156.20H143.3" stroke="#555" stroke-width="0.9"/><path d="M142 164.55H143.3" stroke="#555" stroke-width="0.9"/><path d="M142 172.90H143.3" stroke="#555" stroke-width="0.9"/><path d="M142 181.25H143.3" stroke="#555" stroke-width="0.9"/><path d="M142 189.60H143.3" stroke="#555" stroke-width="0.9"/><path d="M142 197.95H143.3" stroke="#555" stroke-width="0.9"/><path d="M139.5 206.30H143.3" stroke="#444" stroke-width="0.9"/><path d="M142 214.65H143.3" stroke="#555" stroke-width="0.9"/><path d="M142 223.00H143.3" stroke="#555" stroke-width="0.9"/><path d="M142 231.35H143.3" stroke="#555" stroke-width="0.9"/><path d="M142 239.70H143.3" stroke="#555" stroke-width="0.9"/><path d="M142 248.05H143.3" stroke="#555" stroke-width="0.9"/><path d="M142 256.40H143.3" stroke="#555" stroke-width="0.9"/><path d="M142 264.75H143.3" stroke="#555" stroke-width="0.9"/><path d="M142 273.10H143.3" stroke="#555" stroke-width="0.9"/><path d="M142 281.45H143.3" stroke="#555" stroke-width="0.9"/><path d="M139.5 289.80H143.3" stroke="#444" stroke-width="0.9"/><path d="M131 114.4H143.5" stroke="#3a3a6a" stroke-width="0.9" stroke-dasharray="1.3 1.3"/><path d="M132 118.2H143.5" stroke="#e0a8a8" stroke-width="0.9"/></svg>
<div class="t" style="left:131px;top:120.3px;width:10px;height:5px;font-size:5px;text-align:center;transform:rotate(-90deg);color:#333">10</div>
<div class="t" style="left:131px;top:203.8px;width:10px;height:5px;font-size:5px;text-align:center;transform:rotate(-90deg);color:#333">20</div>
<div class="t" style="left:131px;top:287.3px;width:10px;height:5px;font-size:5px;text-align:center;transform:rotate(-90deg);color:#333">30</div>
<div class="a" style="left:18px;top:53.8px;width:69px;height:38px;background:#d9f6d2;border:0.8px solid #7ec874"></div>
<div class="a" style="left:49px;top:59px;width:17px;height:12px;border-radius:1.5px;background:linear-gradient(#e8b870,#b86818);border:0.7px solid #704010"></div>
<div class="a" style="left:50.5px;top:63.5px;width:14px;height:1px;background:#f8e0b0"></div>
<div class="a" style="left:50.5px;top:66.5px;width:14px;height:1px;background:#f8e0b0"></div>
<div class="a" style="left:24px;top:74px;width:12px;height:8.5px;border-radius:1px;background:linear-gradient(#a8d8c8,#5aa898);border:0.7px solid #2a5a58"></div>
<div class="a" style="left:26px;top:77.5px;width:8px;height:1px;background:#2a5a58;opacity:.6"></div>
<div class="a" style="left:39px;top:74px;width:12px;height:8.5px;border-radius:1px;background:linear-gradient(#a8d8c8,#5aa898);border:0.7px solid #2a5a58"></div>
<div class="a" style="left:41px;top:77.5px;width:8px;height:1px;background:#2a5a58;opacity:.6"></div>
<div class="a" style="left:54px;top:74px;width:12px;height:8.5px;border-radius:1px;background:linear-gradient(#a8d8c8,#5aa898);border:0.7px solid #2a5a58"></div>
<div class="a" style="left:56px;top:77.5px;width:8px;height:1px;background:#2a5a58;opacity:.6"></div>
<svg style="left:0;top:0" width="120" height="160"><path d="M66 78.3H69.5" stroke="#555" stroke-width="0.7"/></svg>
<div class="a" style="left:69.2px;top:67.2px;width:14px;height:68.5px;border-radius:1.5px;background:#2a4a68;border:0.8px solid #1a3050"></div>
<div class="a" style="left:71px;top:68.5px;width:10.5px;height:24px;background:repeating-linear-gradient(#9ae0d8 0,#5ab0b0 1.3px,#2a5a70 2px,#2a5a70 2.7px)"></div>
<div class="a" style="left:71px;top:92.5px;width:10.5px;height:42px;background:repeating-linear-gradient(#a0d0f0 0,#5a90c0 1.3px,#2a4a70 2px,#2a4a70 2.7px)"></div>
<div class="a" style="left:75.5px;top:127.5px;width:6px;height:6.5px;background:#a8c8e8"></div>
<div class="a" style="left:7.2px;top:29px;width:8.8px;height:7.3px;background:linear-gradient(#78c4dc 0,#78c4dc 1.6px,#fafafa 1.6px);border:0.7px solid #8090a0;border-radius:0.5px"></div>
<div class="a" style="left:12.5px;top:33px;width:3px;height:3px;background:#f0d890;border-radius:50%"></div>
<div class="a" style="left:20px;top:29.2px;width:5px;height:7px;border-radius:1px;background:linear-gradient(90deg,#f8e8a0,#e8c860)"></div>
<div class="a" style="left:22.3px;top:29.5px;width:6.3px;height:6.5px;border-radius:50%;background:radial-gradient(circle at 40% 40%,#b0e880,#38a028 70%,#288018)"></div>
<svg style="left:30.5px;top:31.8px" width="3" height="2.5"><path d="M0 0.3H3L1.5 2Z" fill="#333"/></svg>
<div class="a" style="left:36px;top:29px;width:7.8px;height:7.5px;border-radius:1px;background:linear-gradient(#d0ecf4 0,#c8e4ec 3.5px,#4a7a88 3.5px);border:0.9px solid #3a5a70"></div>
<div class="a" style="left:39.5px;top:33px;width:3.5px;height:2.8px;background:#40a060;border-radius:0.5px"></div>
<div class="a" style="left:52.8px;top:26.6px;width:12.2px;height:12px;background:#d2e4f6;border:0.8px solid #a4c4e4"></div>
<div class="a" style="left:65px;top:26.6px;width:12.8px;height:12px;background:#d2e4f6;border:0.8px solid #a4c4e4"></div>
<svg style="left:55.5px;top:29px" width="8" height="8"><path d="M1.5 7.5V1.5H7.5" stroke="#e8b050" stroke-width="1.8" fill="none"/></svg>
<svg style="left:67.5px;top:28.5px" width="9" height="9"><path d="M0.5 0.5H8.5V8.5H0.5ZM0.5 3.2H8.5M0.5 5.8H8.5M3.2 0.5V8.5M5.8 0.5V8.5" stroke="#7aa0d0" stroke-width="0.7" fill="none"/></svg>
<svg style="left:82px;top:28.5px" width="12" height="9"><path d="M2 4.5C4 1.5 9 1.5 10 6.5" stroke="#2a6ac0" stroke-width="1.8" fill="none"/><path d="M0.3 2.3L3.8 2.3L1.5 6.3Z" fill="#2a6ac0"/></svg>
<svg style="left:93px;top:32px" width="3" height="3"><path d="M0 0.5H3L1.5 2.5Z" fill="#333"/></svg>
<svg style="left:100px;top:28.5px" width="12" height="9"><path d="M10 4.5C8 1.5 3 1.5 2 6.5" stroke="#b0b0b0" stroke-width="1.8" fill="none"/><path d="M11.7 2.3L8.2 2.3L10.5 6.3Z" fill="#b0b0b0"/></svg>
<svg style="left:112px;top:32px" width="3" height="3"><path d="M0 0.5H3L1.5 2.5Z" fill="#999"/></svg>
<div class="t" style="left:120px;top:31px;font-size:6.720px;transform:scaleX(0.8929);transform-origin:0 0;color:#222">Zoom:</div>
<div class="a" style="left:138.4px;top:27.4px;width:37.2px;height:11px;background:#fff;border:0.8px solid #c8c8c8"></div>
<div class="t" style="left:141px;top:31px;font-size:6.720px;transform:scaleX(0.8929);transform-origin:0 0;color:#222">100%</div>
<svg style="left:168.5px;top:31px" width="5" height="4"><path d="M0.5 0.8L2.5 2.8L4.5 0.8" stroke="#333" stroke-width="0.9" fill="none"/></svg>
<svg style="left:178px;top:28px" width="10" height="10"><circle cx="4" cy="3.8" r="2.7" stroke="#3a9a30" stroke-width="1.2" fill="#eef6fa"/><path d="M5.8 5.8L8.8 8.8" stroke="#3a9a30" stroke-width="1.7"/><path d="M1.5 8.8H5" stroke="#3a9a30" stroke-width="1.2" opacity=".7"/></svg>
<svg style="left:189.5px;top:28px" width="10" height="10"><circle cx="4" cy="3.8" r="2.7" stroke="#3a70b0" stroke-width="1.2" fill="#eef6fa"/><path d="M5.8 5.8L8.8 8.8" stroke="#3a70b0" stroke-width="1.7"/><path d="M1.5 8.8H5" stroke="#3a70b0" stroke-width="1.2" opacity=".7"/></svg>
<svg style="left:202px;top:28px" width="10" height="10"><circle cx="4" cy="3.8" r="2.7" stroke="#9a9a9a" stroke-width="1.2" fill="#eef6fa"/><path d="M5.8 5.8L8.8 8.8" stroke="#9a9a9a" stroke-width="1.7"/><path d="M1.5 8.8H5" stroke="#9a9a9a" stroke-width="1.2" opacity=".7"/></svg>
<svg style="left:219.5px;top:28px" width="9" height="10"><path d="M1.5 3.2H7.5M1.5 6.8H7.5" stroke="#d04858" stroke-width="1.5"/><path d="M2.5 1.5V8.5" stroke="#6a8ac0" stroke-width="1.2"/></svg>
<svg style="left:234.5px;top:28.5px" width="8" height="9"><path d="M1.2 1.5L6.8 7.8M6.8 1.5L1.2 7.8" stroke="#d83838" stroke-width="1.3"/></svg>
<div class="a" style="left:267px;top:28.5px;width:8px;height:8px;border-radius:50%;background:radial-gradient(circle at 40% 40%,#60d0c0,#2a8a9a 70%,#1a6a7a)"></div>
<div class="a" style="left:269px;top:31px;width:4px;height:3px;background:#e06040;border-radius:1px"></div>
<div class="a" style="left:282.5px;top:28px;width:8px;height:9px;border-radius:1px;background:linear-gradient(#3a5a80,#1a3050);border:0.6px solid #203040"></div>
<div class="a" style="left:284.5px;top:30px;width:4px;height:3px;background:#60b0e0"></div>
<div class="a" style="left:7px;top:158.6px;width:42.5px;height:11.5px;background:#fafafa;border:0.8px solid #d4d4d4;border-bottom:none"></div>
<div class="a" style="left:9px;top:160px;width:6.5px;height:7px;background:linear-gradient(#9ad0f0,#3a8ac0);border:0.6px solid #2a6a90;border-radius:1px"></div>
<div class="t" style="left:19px;top:162px;font-size:6.720px;transform:scaleX(0.8929);transform-origin:0 0;color:#222">Properties</div>
<div class="a" style="left:6.5px;top:169.5px;width:122px;height:320px;background:#f0f0f0;border:0.8px solid #d8d8d8"></div>
<div class="a" style="left:7.3px;top:170.2px;width:120.5px;height:14.5px;background:linear-gradient(#fcf0e6,#fbe8de)"></div>
<div class="a" style="left:9.6px;top:172.2px;width:47px;height:11.3px;background:#fff;border:0.8px solid #cfcfcf"></div>
<svg style="left:58px;top:172.5px" width="9" height="10"><path d="M2.5 2C4.5 -0.5 8 2 6 5" stroke="#2a9ab8" stroke-width="1.6" fill="none"/><path d="M5 6L3 9" stroke="#60a8c0" stroke-width="1.4"/></svg>
<div class="a" style="left:68.5px;top:173.5px;width:7.5px;height:6px;background:#f0c860;border-radius:1px"></div>
<div class="a" style="left:71.0px;top:175.5px;width:6px;height:6px;border-radius:50%;background:radial-gradient(#a8e8f8,#2a98c8)"></div>
<div class="a" style="left:80px;top:173.5px;width:7.5px;height:6px;background:#f0c860;border-radius:1px"></div>
<div class="a" style="left:82.5px;top:175.5px;width:6px;height:6px;border-radius:50%;background:radial-gradient(#a8e8f8,#2a98c8)"></div>
<div class="a" style="left:90.4px;top:172.5px;width:11.3px;height:11.5px;background:#c8ddf2;border:0.6px solid #a8c8e8"></div>
<div class="a" style="left:93px;top:173.5px;width:3px;height:9.5px;background:#8ab8e0"></div>
<div class="a" style="left:97px;top:173.5px;width:3px;height:9.5px;background:#e8b060"></div>
<svg style="left:116px;top:173px" width="9" height="10"><path d="M4 1L8 5L6 6.5L2.5 3Z" fill="#e03838"/><path d="M4.5 5.5L1 9" stroke="#a02020" stroke-width="1"/></svg>
<div class="a" style="left:7.3px;top:184.9px;width:8px;height:33px;background:#f7ede4"></div>
<div class="a" style="left:14.8px;top:185.2px;width:113px;height:7.5px;background:#7c7c7c"></div>
<div class="a" style="left:16px;top:186.5px;width:5px;height:5px;background:linear-gradient(#8ad0f0,#2a8ac0);border:0.5px solid #cde"></div>
<svg style="left:23px;top:185.5px" width="8" height="7"><path d="M1 1L4 6L7 1" stroke="#40c040" stroke-width="1.5" fill="none"/><circle cx="2" cy="2" r="1.2" fill="#e04040"/></svg>
<div class="t" style="left:32.2px;top:186px;font-size:6.720px;transform:scaleX(0.8929);transform-origin:0 0;color:#e0e0e0;-webkit-text-stroke:0">Miscellaneous</div>
<svg style="left:4px;top:182px" width="9" height="9"><path d="M1 8L7 2" stroke="#666" stroke-width="0.9"/><circle cx="6.5" cy="2.5" r="1.5" fill="#e8c040"/><path d="M1 3H4M2.5 1.5V4.5" stroke="#40a040" stroke-width="0.9"/></svg>
<div class="a" style="left:14.8px;top:192.7px;width:113px;height:25px;background:#e9f2fb"></div>
<div class="a" style="left:75.3px;top:193px;width:0.8px;height:24.5px;background:#9aa8b8"></div>
<div class="a" style="left:16px;top:194.5px;width:5px;height:5px;background:linear-gradient(#8ad0f0,#2a8ac0);border:0.5px solid #5a9ac0"></div>
<div class="t" style="left:24px;top:194px;font-size:6.720px;transform:scaleX(0.8929);transform-origin:0 0;color:#333">Elements</div>
<div class="t" style="left:76.5px;top:194px;font-size:6.720px;transform:scaleX(0.8929);transform-origin:0 0;color:#777">3 Items</div>
<div class="t" style="left:24px;top:203px;font-size:6.720px;transform:scaleX(0.8929);transform-origin:0 0;color:#333">Name</div>
<div class="t" style="left:76.5px;top:203px;font-size:6.720px;transform:scaleX(0.8929);transform-origin:0 0;color:#111;font-weight:bold">FormattedText1</div>
<svg style="left:24px;top:210px" width="8" height="8"><path d="M1 7L6 2M2 2L6 6" stroke="#888" stroke-width="1.3"/></svg>
<div class="t" style="left:32.6px;top:211px;font-size:6.720px;transform:scaleX(0.8929);transform-origin:0 0;color:#333">Text</div>
<div class="t" style="left:133px;top:308px;font-size:6.720px;transform:scaleX(0.8929);transform-origin:0 0;color:#111">577:309</div>
<div class="a" style="left:166px;top:306px;width:1px;height:10px;background:#e0e0e0"></div>
<div class="t" style="left:169.5px;top:308px;font-size:6.720px;transform:scaleX(0.8929);transform-origin:0 0;color:#111">FormattedText1.__OpenWireRootUnit__.FormattedText1.Elements._Item0.InputPin 576:304</div>
<div class="a" style="left:129px;top:317px;width:476px;height:26.5px;background:linear-gradient(#f4f1ee 0,#faf3e4 4px,#f9efe6 50%,#f9ece4 100%)"></div>
<div class="t" style="left:137px;top:322px;font-size:6.720px;transform:scaleX(0.8929);transform-origin:0 0;color:#333">Port:</div>
<div class="a" style="left:152px;top:319px;width:46px;height:11px;background:#efefef;border:0.8px solid #cdcdcd"></div>
<div class="a" style="left:153px;top:320px;width:35px;height:9px;overflow:hidden">
<div class="t" style="left:2px;top:2px;font-size:6.720px;transform:scaleX(0.8929);transform-origin:0 0;color:#333">COM5 (Unavailable)</div>
</div>
<svg style="left:190.5px;top:323px" width="5" height="4"><path d="M0.5 0.8L2.5 2.8L4.5 0.8" stroke="#333" stroke-width="0.9" fill="none"/></svg>
<div class="t" style="left:201.2px;top:322px;font-size:6.720px;transform:scaleX(0.8929);transform-origin:0 0;color:#333">Speed:</div>
<div class="a" style="left:222.3px;top:319px;width:38px;height:11px;background:#fff;border:0.8px solid #cdcdcd"></div>
<div class="t" style="left:225px;top:322px;font-size:6.720px;transform:scaleX(0.8929);transform-origin:0 0;color:#222">9600</div>
<svg style="left:254px;top:323px" width="5" height="4"><path d="M0.5 0.8L2.5 2.8L4.5 0.8" stroke="#333" stroke-width="0.9" fill="none"/></svg>
<div class="t" style="left:263px;top:322px;font-size:6.720px;transform:scaleX(0.8929);transform-origin:0 0;color:#333"><u>F</u>ormat:</div>
<div class="a" style="left:286px;top:319px;width:92px;height:11px;background:#fff;border:0.8px solid #cdcdcd"></div>
<div class="t" style="left:289px;top:322px;font-size:6.720px;transform:scaleX(0.8929);transform-origin:0 0;color:#222">Unformatted Text</div>
<svg style="left:371px;top:323px" width="5" height="4"><path d="M0.5 0.8L2.5 2.8L4.5 0.8" stroke="#333" stroke-width="0.9" fill="none"/></svg>
<div class="a" style="left:381px;top:319px;width:47px;height:11px;background:#efefef;border:0.8px solid #d0d0d0"></div>
<svg style="left:389px;top:320.5px" width="8" height="8"><path d="M1 7.5H7V2.5" stroke="#888" stroke-width="0.8" fill="none"/><path d="M1.5 6L6 1.5" stroke="#777" stroke-width="1.1"/></svg>
<div class="t" style="left:399px;top:322px;font-size:6.720px;transform:scaleX(0.8929);transform-origin:0 0;color:#333">Connect</div>
<svg style="left:596px;top:320px" width="8" height="9"><path d="M1 8L7 1" stroke="#3060c0" stroke-width="1.5"/><path d="M1 1.5L7 8" stroke="#d04040" stroke-width="1.3"/><circle cx="1.8" cy="1.8" r="1.3" fill="#555"/></svg>
<div class="a" style="left:130px;top:343px;width:475px;height:147px;background:#fff;border:0.8px solid #d6d6d6"></div>
<div class="a" style="left:171.6px;top:333.3px;width:30.8px;height:10.5px;background:linear-gradient(#eef3f9,#dde7f2);border:0.8px solid #c8d0da;border-bottom:none"></div>
<div class="a" style="left:175.2px;top:335.5px;width:6.8px;height:5.5px;background:linear-gradient(#a8d8f8,#3a7ac0);border:0.6px solid #2a5a90"></div>
<div class="t" style="left:185.5px;top:337px;font-size:6.720px;transform:scaleX(0.8929);transform-origin:0 0;color:#222">Scope</div>
<div class="a" style="left:130.8px;top:332.2px;width:41px;height:12px;background:#fff;border:0.8px solid #d0d0d0;border-bottom:none"></div>
<div class="a" style="left:136.3px;top:334.6px;width:6.8px;height:5.5px;background:linear-gradient(#3a5a3a,#1a2a1a);border:0.6px solid #203020"></div>
<div class="t" style="left:147px;top:336px;font-size:6.720px;transform:scaleX(0.8929);transform-origin:0 0;color:#222">Terminal</div>
<div class="a" style="left:137px;top:351px;width:6.6px;height:7px;background:#fff;border:0.8px solid #999"></div>
<svg style="left:137.8px;top:351.8px" width="6" height="6"><path d="M0.8 3.2L2.4 5L5.2 1" stroke="#111" stroke-width="1.3" fill="none"/></svg>
<div class="t" style="left:145px;top:352px;font-size:6.720px;transform:scaleX(0.8929);transform-origin:0 0;color:#222">Auto Scroll</div>
<div class="a" style="left:178px;top:351px;width:7px;height:7px;background:#fff;border:0.8px solid #999"></div>
<div class="t" style="left:187px;top:352px;font-size:6.720px;transform:scaleX(0.8929);transform-origin:0 0;color:#222">Hold</div>
<div class="a" style="left:133px;top:362px;width:470.5px;height:107.5px;background:#fff;border:0.8px solid #c8c8c8"></div>
<svg style="left:595.5px;top:365px" width="5" height="4"><path d="M0.5 3L2.5 1L4.5 3" stroke="#999" stroke-width="0.8" fill="none"/></svg>
<svg style="left:595.5px;top:463px" width="5" height="4"><path d="M0.5 1L2.5 3L4.5 1" stroke="#999" stroke-width="0.8" fill="none"/></svg>
<div class="a" style="left:137.7px;top:474px;width:378px;height:11px;background:#fff;border:0.8px solid #d8d8d8"></div>
<div class="a" style="left:520px;top:476px;width:6.6px;height:7px;background:#fff;border:0.8px solid #999"></div>
<svg style="left:520.8px;top:476.8px" width="6" height="6"><path d="M0.8 3.2L2.4 5L5.2 1" stroke="#111" stroke-width="1.3" fill="none"/></svg>
<div class="t" style="left:528.4px;top:477px;font-size:6.720px;transform:scaleX(0.8929);transform-origin:0 0;color:#222">Auto Clear</div>
<div class="a" style="left:562.4px;top:473px;width:37px;height:12.5px;background:#efefef;border:0.8px solid #dcdcdc"></div>
<div class="a" style="left:571px;top:476.5px;width:6.5px;height:5.5px;background:linear-gradient(#bbb,#777);border:0.5px solid #555"></div>
<div class="t" style="left:581px;top:477px;font-size:6.720px;transform:scaleX(0.8929);transform-origin:0 0;color:#333">Send</div>
<div class="a" style="left:603.5px;top:343px;width:1.5px;height:147px;background:#e4e4e4"></div>
<div class="a" style="left:604.6px;top:39px;width:0.9px;height:451px;background:#e2e2e2"></div>
<div class="a" style="left:609.5px;top:42px;width:57.5px;height:10.6px;background:#fff;border:0.8px solid #c8c8c8"></div>
<div class="t" style="left:612px;top:45px;font-size:6.720px;transform:scaleX(0.8929);transform-origin:0 0;color:#222">form</div>
<svg style="left:670.5px;top:42.5px" width="9" height="9"><path d="M1.2 1.2L7.5 8M7.5 1.2L1.2 8" stroke="#c8303c" stroke-width="1.3"/><path d="M2.5 7L6.5 2.5" stroke="#9a6a70" stroke-width="0.6"/></svg>
<div class="a" style="left:680px;top:41.5px;width:11px;height:11px;background:#c8dcf4;border:0.7px solid #9ab8dc"></div>
<svg style="left:681.5px;top:43px" width="8" height="8"><path d="M4 0.8V6.5" stroke="#2a3a90" stroke-width="1.3"/><path d="M1 4.5C1.5 7 6.5 7 7 4.5" stroke="#2a3a90" stroke-width="1.1" fill="none"/><path d="M2.5 7.5H5.5" stroke="#2a3a90" stroke-width="1"/></svg>
<svg style="left:692px;top:46px" width="4" height="3"><path d="M0 0.5H3.5L1.75 2.5Z" fill="#333"/></svg>
<div class="a" style="left:697px;top:43.5px;width:8px;height:7px;background:linear-gradient(#fbf0b8,#eed478);border:0.6px solid #c8a850;border-radius:1px"></div>
<div class="a" style="left:709px;top:43.5px;width:7px;height:6px;background:#f0d890;border-radius:1px"></div>
<div class="a" style="left:710px;top:45px;width:7px;height:6px;border-radius:45%;background:radial-gradient(#c8f4f8,#38a8c0 70%)"></div>
<div class="a" style="left:721px;top:43.5px;width:7px;height:6px;background:#f0d890;border-radius:1px"></div>
<div class="a" style="left:722px;top:45px;width:7px;height:6px;border-radius:45%;background:radial-gradient(#c8f4f8,#38a8c0 70%)"></div>
<svg style="left:732px;top:43px" width="9" height="9"><path d="M1 8L7.5 1.5" stroke="#3a58b0" stroke-width="1.4"/><path d="M1.5 1.5L8 8" stroke="#c84848" stroke-width="1.4"/></svg>
<div class="a" style="left:609.2px;top:55.6px;width:42.7px;height:42px;background:#fff;border:1.4px solid #44a844;border-radius:2.5px"></div>
<div class="a" style="left:610.7px;top:57.2px;width:40.1px;height:9.5px;background:linear-gradient(#b8f4b0,#78dc70);border-bottom:0.8px solid #60b060"></div>
<div class="t" style="left:612px;top:61px;font-size:4.240px;transform:scaleX(0.9434);transform-origin:0 0;color:#2a6a20">Abc</div>
<div class="t" style="left:623px;top:59px;font-size:7.420px;transform:scaleX(0.9434);transform-origin:0 0;color:#d8f8d0;-webkit-text-stroke:0">Text</div>
<div class="a" style="left:615px;top:72px;width:19px;height:19px;border-radius:2px;background:linear-gradient(#8a8a8a,#6a6a6a 60%,#4a4a4a);border:0.8px solid #4a4a4a"></div>
<div class="a" style="left:617.5px;top:74px;width:13.5px;height:13px;background:linear-gradient(#fafafa,#e4e4e4);border-radius:1px"></div>
<div class="t" style="left:621px;top:78px;font-size:3.392px;transform:scaleX(0.9434);transform-origin:0 0;color:#8a8aa0;-webkit-text-stroke:0">1.8.</div>
<div class="t" style="left:620px;top:82px;font-size:3.816px;transform:scaleX(0.9434);transform-origin:0 0;color:#111;font-weight:bold">1234</div>
<div class="a" style="left:655px;top:56px;width:65.7px;height:65px;background:#fff;border:1.7px solid #333;border-radius:3px"></div>
<div class="a" style="left:656.6px;top:57.6px;width:62.5px;height:9.3px;background:linear-gradient(#a0a0a0,#6a6a6a);border-bottom:0.8px solid #505050"></div>
<div class="a" style="left:658px;top:59px;width:6px;height:5px;border-radius:50%;background:radial-gradient(#f8c070,#c06010)"></div>
<div class="t" style="left:667.5px;top:59px;font-size:7.208px;transform:scaleX(0.9434);transform-origin:0 0;color:#e8e8e8;-webkit-text-stroke:0">Data Sources</div>
<div class="a" style="left:660.8px;top:71.8px;width:42.6px;height:42.6px;background:#fff;border:1.6px solid #333;border-radius:2.5px"></div>
<div class="a" style="left:662.3px;top:73.3px;width:39.6px;height:9.5px;background:linear-gradient(#a0a0a0,#686868);border-bottom:0.8px solid #505050"></div>
<div class="t" style="left:662.5px;top:77px;font-size:4.240px;transform:scaleX(0.9434);transform-origin:0 0;color:#c08040">Abc</div>
<div class="t" style="left:674px;top:75px;font-size:7.420px;transform:scaleX(0.9434);transform-origin:0 0;color:#f4f4f4;-webkit-text-stroke:0">Text</div>
<div class="a" style="left:667px;top:88.5px;width:19px;height:19px;border-radius:2px;background:linear-gradient(#8a8a8a,#6a6a6a 60%,#4a4a4a);border:0.8px solid #4a4a4a"></div>
<div class="a" style="left:669.5px;top:90.5px;width:13.5px;height:13px;background:linear-gradient(#fafafa,#e4e4e4);border-radius:1px"></div>
<div class="t" style="left:673px;top:94px;font-size:3.392px;transform:scaleX(0.9434);transform-origin:0 0;color:#8a8aa0;-webkit-text-stroke:0">1.8.</div>
<div class="t" style="left:672px;top:98px;font-size:3.816px;transform:scaleX(0.9434);transform-origin:0 0;color:#111;font-weight:bold">1234</div>
<div class="a" style="left:605px;top:475.5px;width:139px;height:15px;background:linear-gradient(#f0f0f0,#fcefe6 25%,#fbe9e0)"></div>
<div class="t" style="left:654px;top:481px;font-size:6.720px;transform:scaleX(0.8929);transform-origin:0 0;font-weight:bold;color:#222">Arduino eBay Ads:</div>
<svg style="left:721.5px;top:479.5px" width="9" height="9"><path d="M1.2 7.8L7.5 1.5" stroke="#4a50a8" stroke-width="1.4"/><path d="M1.5 1.5L7.8 7.8" stroke="#b89060" stroke-width="1.5"/></svg>
<div class="a" style="left:734px;top:480px;width:7.5px;height:8px;background:linear-gradient(#d84848,#b02828);border-radius:1.5px"></div>
<div class="a" style="left:735.7px;top:481.8px;width:4px;height:4px;border:0.8px solid #f8c8c8;border-radius:50%;border-top-color:transparent"></div>
</body></html>
